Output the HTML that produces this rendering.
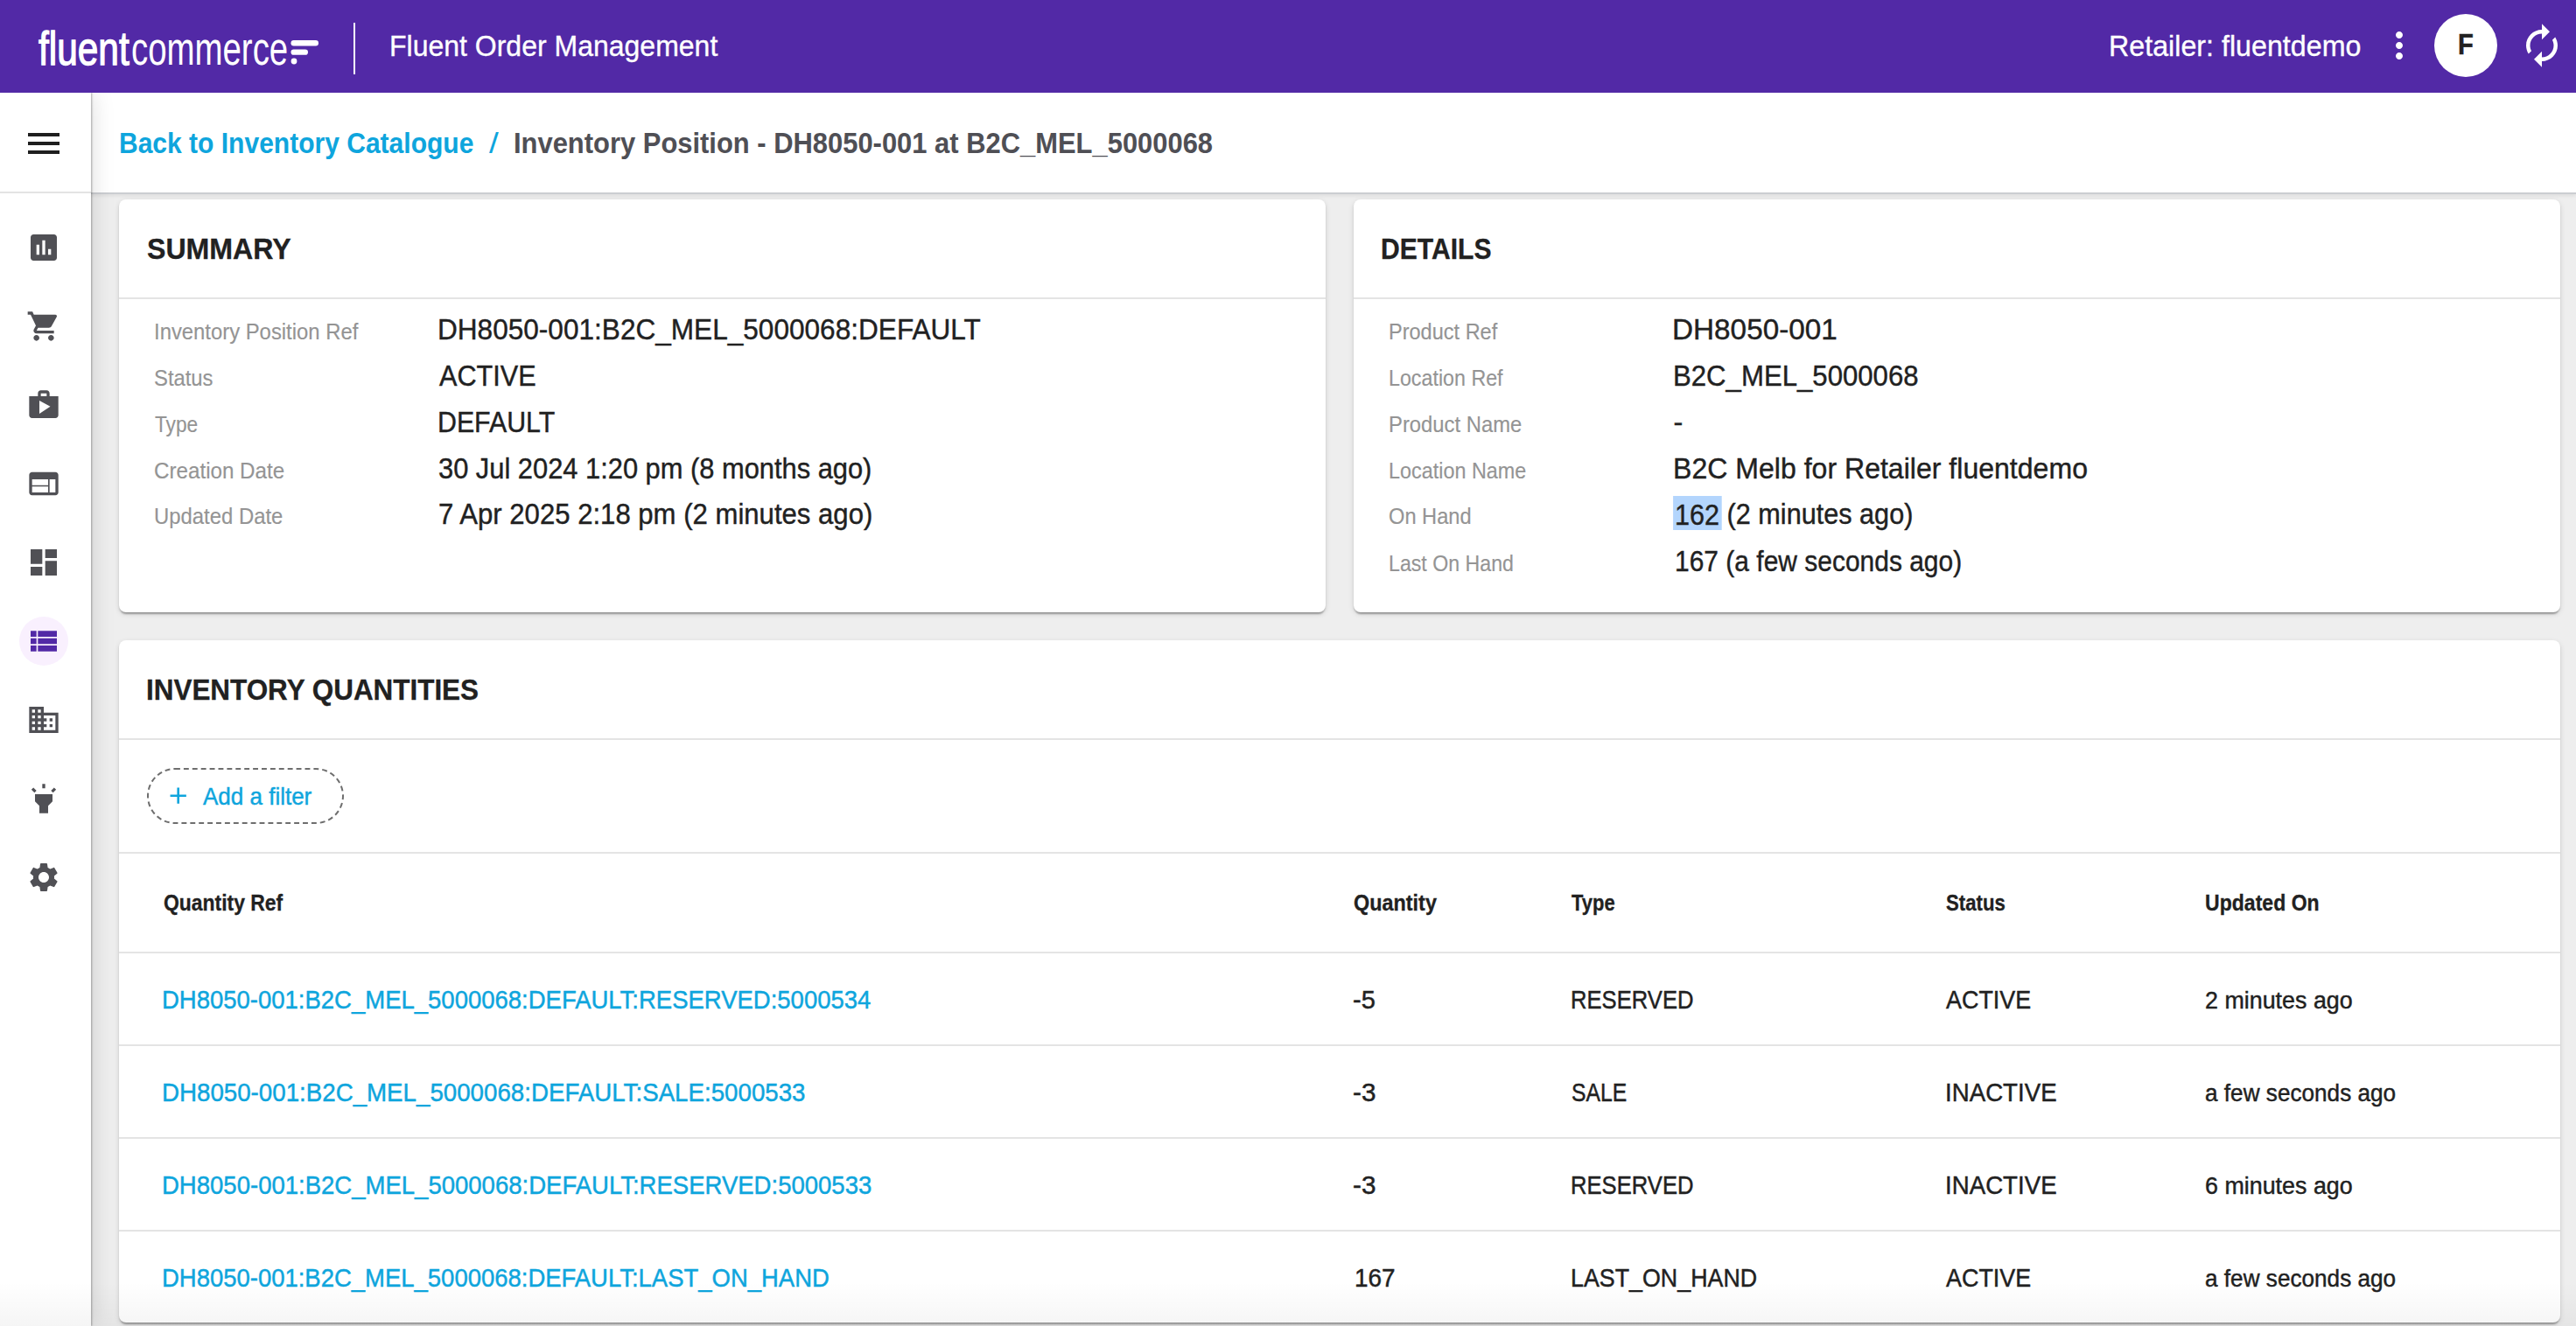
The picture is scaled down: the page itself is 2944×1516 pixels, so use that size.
<!DOCTYPE html>
<html lang="en">
<head>
<meta charset="utf-8">
<title>Fluent Order Management - Inventory Position</title>
<style>
*{box-sizing:border-box}
@media (max-width:2000px){html{zoom:.5}}
html,body{margin:0;padding:0}
body{width:2944px;height:1516px;overflow:hidden;background:#eeeeee;font-family:"Liberation Sans",sans-serif;color:#212121;position:relative}
.t{position:absolute;white-space:pre;line-height:1;margin:0;padding:0;text-decoration:none;font-weight:400;display:block;-webkit-text-stroke:.06px currentColor}
h2.t{font-weight:700}
.ic{position:absolute;display:block}
ul{list-style:none;margin:0;padding:0}
.appbar{position:absolute;left:0;top:0;width:2944px;height:106px;background:#5229a6;z-index:30}
.appbar .vr{position:absolute;left:404px;top:26px;width:2px;height:59px;background:#fff}
.avatar{position:absolute;left:2781.5px;top:15.75px;width:72px;height:72px;border-radius:50%;background:#fff}
.mark{position:absolute;left:330px;top:40px;width:40px;height:40px}
.nav{position:absolute;left:0;top:106px;width:104px;height:1410px;background:#fff;z-index:20;box-shadow:1px 0 2px rgba(0,0,0,.3),2px 0 24px rgba(0,0,0,.13)}
.nav .rule{position:absolute;left:0;top:113px;width:104px;height:2px;background:#e3e3e3}
.halo{position:absolute;width:56px;height:56px;border-radius:50%;background:#f9f0fe}
.crumbs{position:absolute;left:104px;top:106px;width:2840px;height:116px;background:#fff;z-index:10;border-bottom:2px solid #cbcdd1;box-shadow:0 2px 4px rgba(0,0,0,.07)}
.card{position:absolute;background:#fff;border-radius:8px;box-shadow:0 4px 2px -2px rgba(0,0,0,.2),0 2px 2px 0 rgba(0,0,0,.14),0 2px 6px 0 rgba(0,0,0,.12)}
.sep{position:absolute;left:0;right:0;height:2px;background:#e4e4e4}
.chip{position:absolute}
.chip svg.bd{position:absolute;left:0;top:0;overflow:visible}
.lf{-webkit-text-stroke:1.1px #fff}
.appbar .t{-webkit-text-stroke:.35px #fff}
.appbar .avatar .t{-webkit-text-stroke:.5px #212121}
h2.t,.th{-webkit-text-stroke:.3px currentColor}
.k{-webkit-text-stroke:.15px currentColor}
.v{-webkit-text-stroke:.4px currentColor}
.td,.chip .t{-webkit-text-stroke:.45px currentColor}
.appbar .t.lf{-webkit-text-stroke:1.3px #fff}
.appbar .t.lc{-webkit-text-stroke:0}
mark{background:#b3d5fd;color:inherit;padding:3.5px 3px 0 2px;margin:0 -3px 0 -2px}
.fade{position:absolute;left:0;right:0;bottom:0;height:50px;z-index:40;background:linear-gradient(rgba(0,0,0,0),rgba(0,0,0,.04))}
</style>
</head>
<body>
<header class="appbar">
<div class="brand">
<span class="t lf" style="left:44.00px;top:29px;font-size:53px;color:#fff;transform:scaleX(0.8000);transform-origin:0 0;">fluent</span>
<span class="t lc" style="left:150.15px;top:29px;font-size:53px;color:#fff;transform:scaleX(0.7243);transform-origin:0 0;">commerce</span>
<svg class="mark" viewBox="0 0 40 40"><rect x="2.5" y="6" width="31.5" height="6.4" rx="3.2" fill="#fff"/><rect x="2.5" y="16.6" width="19.5" height="6.2" rx="3.1" fill="#fff"/><circle cx="6" cy="30" r="3.4" fill="#fff"/></svg>
</div>
<div class="vr"></div>
<span class="t" style="left:444.59px;top:36px;font-size:33.5px;color:#fff;transform:scaleX(0.9552);transform-origin:0 0;">Fluent Order Management</span>
<span class="t" style="left:2409.83px;top:36px;font-size:33.5px;color:#fff;transform:scaleX(0.9621);transform-origin:0 0;">Retailer: fluentdemo</span>
<svg class="ic" style="left:2717.75px;top:28px;width:48px;height:48px;fill:#fff" viewBox="0 0 24 24"><path d="M12 8c1.1 0 2-.9 2-2s-.9-2-2-2-2 .9-2 2 .9 2 2 2zm0 2c-1.1 0-2 .9-2 2s.9 2 2 2 2-.9 2-2-.9-2-2-2zm0 6c-1.1 0-2 .9-2 2s.9 2 2 2 2-.9 2-2-.9-2-2-2z"/></svg>
<div class="avatar"><span class="t av" style="left:27.59px;top:17.25px;font-size:34px;font-weight:700;transform:scaleX(0.8556);transform-origin:0 0;">F</span></div>
<svg class="ic" style="left:2878px;top:25px;width:54px;height:54px;fill:#fff" viewBox="0 0 24 24"><path d="M12 6v3l4-4-4-4v3c-4.42 0-8 3.58-8 8 0 1.57.46 3.03 1.24 4.26L6.7 14.8c-.45-.83-.7-1.79-.7-2.8 0-3.31 2.69-6 6-6zm6.76 1.74L17.3 9.2c.44.84.7 1.79.7 2.8 0 3.31-2.69 6-6 6v-3l-4 4 4 4v-3c4.42 0 8-3.58 8-8 0-1.57-.46-3.03-1.24-4.26z"/></svg>
</header>
<aside class="nav">
<svg class="ic" style="left:26px;top:34px;width:48px;height:48px;fill:#1f1f1f" viewBox="0 0 24 24"><path d="M3 18h18v-2H3v2zm0-5h18v-2H3v2zm0-7v2h18V6H3z"/></svg>
<div class="rule"></div>
<ul>
<li><svg class="ic" style="left:30px;top:156.5px;width:40px;height:40px;fill:#505055" viewBox="0 0 24 24"><path d="M19 3H5c-1.1 0-2 .9-2 2v14c0 1.1.9 2 2 2h14c1.1 0 2-.9 2-2V5c0-1.1-.9-2-2-2zM9 17H7v-7h2v7zm4 0h-2V7h2v10zm4 0h-2v-4h2v4z"/></svg></li>
<li><svg class="ic" style="left:30px;top:246.5px;width:40px;height:40px;fill:#505055" viewBox="0 0 24 24"><path d="M7 18c-1.1 0-1.99.9-1.99 2S5.9 22 7 22s2-.9 2-2-.9-2-2-2zM1 2v2h2l3.6 7.59-1.35 2.45c-.16.28-.25.61-.25.96 0 1.1.9 2 2 2h12v-2H7.42c-.14 0-.25-.11-.25-.25l.03-.12.9-1.63h7.45c.75 0 1.41-.41 1.75-1.03l3.58-6.49c.08-.14.12-.31.12-.48 0-.55-.45-1-1-1H5.21l-.94-2H1zm16 16c-1.1 0-1.99.9-1.99 2s.89 2 1.99 2 2-.9 2-2-.9-2-2-2z"/></svg></li>
<li><svg class="ic" style="left:30px;top:336.5px;width:40px;height:40px;fill:#505055" viewBox="0 0 24 24"><path d="M16 6V4c0-1.11-.89-2-2-2h-4c-1.11 0-2 .89-2 2v2H2v13c0 1.11.89 2 2 2h16c1.11 0 2-.89 2-2V6h-6zm-6-2h4v2h-4V4zM9 18V9l7.5 4L9 18z"/></svg></li>
<li><svg class="ic" style="left:30px;top:426.5px;width:40px;height:40px;fill:#505055" viewBox="0 0 24 24"><path d="M20 4H4c-1.1 0-1.99.9-1.99 2L2 18c0 1.1.9 2 2 2h16c1.1 0 2-.9 2-2V6c0-1.1-.9-2-2-2zm-5 14H4v-4h11v4zm0-5H4V9h11v4zm5 5h-4V9h4v9z"/></svg></li>
<li><svg class="ic" style="left:30px;top:516.5px;width:40px;height:40px;fill:#505055" viewBox="0 0 24 24"><path d="M3 13h8V3H3v10zm0 8h8v-6H3v6zm10 0h8V11h-8v10zm0-18v6h8V3h-8z"/></svg></li>
<li class="on"><span class="halo" style="left:22px;top:598.5px"></span><svg class="ic" style="left:30px;top:606.5px;width:40px;height:40px;fill:#5229a6" viewBox="0 0 24 24"><path d="M3 14h4v-4H3v4zm0 5h4v-4H3v4zM3 9h4V5H3v4zm5 5h13v-4H8v4zm0 5h13v-4H8v4zM8 5v4h13V5H8z"/></svg></li>
<li><svg class="ic" style="left:30px;top:696.5px;width:40px;height:40px;fill:#505055" viewBox="0 0 24 24"><path d="M12 7V3H2v18h20V7H12zM6 19H4v-2h2v2zm0-4H4v-2h2v2zm0-4H4V9h2v2zm0-4H4V5h2v2zm4 12H8v-2h2v2zm0-4H8v-2h2v2zm0-4H8V9h2v2zm0-4H8V5h2v2zm10 12h-8v-2h2v-2h-2v-2h2v-2h-2V9h8v10zm-2-8h-2v2h2v-2zm0 4h-2v2h2v-2z"/></svg></li>
<li><svg class="ic" style="left:30px;top:786.5px;width:40px;height:40px;fill:#505055" viewBox="0 0 24 24"><path d="M6 14l3 3v5h6v-5l3-3V9H6v5zm5-12h2v3h-2V2zM3.5 5.88l1.41-1.41 2.12 2.12L5.62 8 3.5 5.88zm13.46.71l2.12-2.12 1.41 1.41L18.38 8l-1.42-1.41z"/></svg></li>
<li><svg class="ic" style="left:30px;top:876.5px;width:40px;height:40px;fill:#505055" viewBox="0 0 24 24"><path d="M19.14 12.94c.04-.3.06-.61.06-.94 0-.32-.02-.64-.07-.94l2.03-1.58c.18-.14.23-.41.12-.61l-1.92-3.32c-.12-.22-.37-.29-.59-.22l-2.39.96c-.5-.38-1.03-.7-1.62-.94l-.36-2.54c-.04-.24-.24-.41-.48-.41h-3.84c-.24 0-.43.17-.47.41l-.36 2.54c-.59.24-1.13.57-1.62.94l-2.39-.96c-.22-.08-.47 0-.59.22L2.74 8.87c-.12.21-.08.47.12.61l2.03 1.58c-.05.3-.09.63-.09.94s.02.64.07.94l-2.03 1.58c-.18.14-.23.41-.12.61l1.92 3.32c.12.22.37.29.59.22l2.39-.96c.5.38 1.03.7 1.62.94l.36 2.54c.05.24.24.41.48.41h3.84c.24 0 .44-.17.47-.41l.36-2.54c.59-.24 1.13-.56 1.62-.94l2.39.96c.22.08.47 0 .59-.22l1.92-3.32c.12-.22.07-.47-.12-.61l-2.01-1.58zM12 15.6c-1.98 0-3.6-1.62-3.6-3.6s1.62-3.6 3.6-3.6 3.6 1.62 3.6 3.6-1.62 3.6-3.6 3.6z"/></svg></li>
</ul>
</aside>
<nav class="crumbs">
<a class="t" href="#" style="left:32.01px;top:41px;font-size:33.6px;font-weight:700;color:#0ea5dd;transform:scaleX(0.8940);transform-origin:0 0;">Back to Inventory Catalogue</a>
<span class="t" style="left:454.50px;top:41px;font-size:33.6px;color:#0ea5dd;transform:scaleX(1.1500);transform-origin:0 0;">/</span>
<span class="t" style="left:482.66px;top:41px;font-size:33.6px;font-weight:700;color:#4f4f55;transform:scaleX(0.9208);transform-origin:0 0;">Inventory Position - DH8050-001 at B2C_MEL_5000068</span>
</nav>
<main>
<section class="card" style="left:136px;top:228px;width:1379px;height:472px">
<div class="sep" style="top:111.5px"></div>
<h2 class="t" style="left:31.64px;top:40px;font-size:33.5px;font-weight:700;transform:scaleX(0.9585);transform-origin:0 0;">SUMMARY</h2>
<span class="t k" style="left:39.89px;top:139px;font-size:25px;color:#949494;transform:scaleX(0.9539);transform-origin:0 0;">Inventory Position Ref</span>
<span class="t v" style="left:364.36px;top:133px;font-size:32.5px;transform:scaleX(0.9716);transform-origin:0 0;">DH8050-001:B2C_MEL_5000068:DEFAULT</span>
<span class="t k" style="left:39.65px;top:192px;font-size:25px;color:#949494;transform:scaleX(0.9522);transform-origin:0 0;">Status</span>
<span class="t v" style="left:365.50px;top:186px;font-size:32.5px;transform:scaleX(0.9419);transform-origin:0 0;">ACTIVE</span>
<span class="t k" style="left:40.60px;top:245px;font-size:25px;color:#949494;transform:scaleX(0.9074);transform-origin:0 0;">Type</span>
<span class="t v" style="left:364.44px;top:239px;font-size:32.5px;transform:scaleX(0.9324);transform-origin:0 0;">DEFAULT</span>
<span class="t k" style="left:39.63px;top:298px;font-size:25px;color:#949494;transform:scaleX(0.9673);transform-origin:0 0;">Creation Date</span>
<span class="t v" style="left:365.35px;top:292px;font-size:32.5px;transform:scaleX(0.9488);transform-origin:0 0;">30 Jul 2024 1:20 pm (8 months ago)</span>
<span class="t k" style="left:40.25px;top:350px;font-size:25px;color:#949494;transform:scaleX(0.9549);transform-origin:0 0;">Updated Date</span>
<span class="t v" style="left:365.34px;top:344px;font-size:32.5px;transform:scaleX(0.9572);transform-origin:0 0;">7 Apr 2025 2:18 pm (2 minutes ago)</span>
</section>
<section class="card" style="left:1547px;top:228px;width:1379px;height:472px">
<div class="sep" style="top:111.5px"></div>
<h2 class="t" style="left:31.20px;top:40px;font-size:33.5px;font-weight:700;transform:scaleX(0.8986);transform-origin:0 0;">DETAILS</h2>
<span class="t k" style="left:39.82px;top:139px;font-size:25px;color:#949494;transform:scaleX(0.9412);transform-origin:0 0;">Product Ref</span>
<span class="t v" style="left:364.45px;top:133px;font-size:32.5px;transform:scaleX(1.0247);transform-origin:0 0;">DH8050-001</span>
<span class="t k" style="left:39.84px;top:192px;font-size:25px;color:#949494;transform:scaleX(0.9302);transform-origin:0 0;">Location Ref</span>
<span class="t v" style="left:364.58px;top:186px;font-size:32.5px;transform:scaleX(0.9586);transform-origin:0 0;">B2C_MEL_5000068</span>
<span class="t k" style="left:39.79px;top:245px;font-size:25px;color:#949494;transform:scaleX(0.9529);transform-origin:0 0;">Product Name</span>
<span class="t v" style="left:365.50px;top:239px;font-size:32.5px;transform:scaleX(1.0000);transform-origin:0 0;">-</span>
<span class="t k" style="left:39.83px;top:298px;font-size:25px;color:#949494;transform:scaleX(0.9355);transform-origin:0 0;">Location Name</span>
<span class="t v" style="left:364.53px;top:292px;font-size:32.5px;transform:scaleX(0.9864);transform-origin:0 0;">B2C Melb for Retailer fluentdemo</span>
<span class="t k" style="left:39.65px;top:350px;font-size:25px;color:#949494;transform:scaleX(0.9459);transform-origin:0 0;">On Hand</span>
<span class="t v" style="left:367.12px;top:344px;font-size:32.5px;transform:scaleX(0.9423);transform-origin:0 0;"><mark>162</mark> (2 minutes ago)</span>
<span class="t k" style="left:39.85px;top:404px;font-size:25px;color:#949494;transform:scaleX(0.9265);transform-origin:0 0;">Last On Hand</span>
<span class="t v" style="left:367.16px;top:398px;font-size:32.5px;transform:scaleX(0.9221);transform-origin:0 0;">167 (a few seconds ago)</span>
</section>
<section class="card" style="left:136px;top:732px;width:2790px;height:780px">
<div class="sep" style="top:112px"></div>
<div class="chip" style="left:32px;top:146px;width:225px;height:64px">
<svg class="bd" width="225" height="64" viewBox="0 0 225 64"><rect x="1" y="1" width="223" height="62" rx="31" fill="none" stroke="#6e6e6e" stroke-width="2" stroke-dasharray="5.9 4"/></svg>
<svg class="ic" style="left:20.3px;top:16.3px;width:31.4px;height:31.4px;fill:#0ea5dd" viewBox="0 0 24 24"><path d="M19 13h-6v6h-2v-6H5v-2h6V5h2v6h6v2z"/></svg>
<span class="t" style="left:64.30px;top:19px;font-size:28px;color:#0ea5dd;transform:scaleX(0.9284);transform-origin:0 0;">Add a filter</span>
</div>
<div class="sep" style="top:242px"></div>
<div class="sep" style="top:355.5px"></div>
<div class="sep" style="top:462px"></div>
<div class="sep" style="top:567.5px"></div>
<div class="sep" style="top:673.5px"></div>
<h2 class="t" style="left:31.12px;top:40px;font-size:33.5px;font-weight:700;transform:scaleX(0.9380);transform-origin:0 0;">INVENTORY QUANTITIES</h2>
<span class="t th" style="left:50.50px;top:287px;font-size:26px;font-weight:700;transform:scaleX(0.8814);transform-origin:0 0;">Quantity Ref</span>
<span class="t th" style="left:1411.40px;top:287px;font-size:26px;font-weight:700;transform:scaleX(0.9000);transform-origin:0 0;">Quantity</span>
<span class="t th" style="left:1660.20px;top:287px;font-size:26px;font-weight:700;transform:scaleX(0.8458);transform-origin:0 0;">Type</span>
<span class="t th" style="left:2088.00px;top:287px;font-size:26px;font-weight:700;transform:scaleX(0.8544);transform-origin:0 0;">Status</span>
<span class="t th" style="left:2384.11px;top:287px;font-size:26px;font-weight:700;transform:scaleX(0.8870);transform-origin:0 0;">Updated On</span>
<a class="t td" href="#" style="left:48.60px;top:397px;font-size:29px;color:#0ea5dd;transform:scaleX(0.9478);transform-origin:0 0;">DH8050-001:B2C_MEL_5000068:DEFAULT:RESERVED:5000534</a>
<span class="t td" style="left:1410.40px;top:397px;font-size:29px;transform:scaleX(1.0042);transform-origin:0 0;">-5</span>
<span class="t td" style="left:1658.83px;top:397px;font-size:29px;transform:scaleX(0.8840);transform-origin:0 0;">RESERVED</span>
<span class="t td" style="left:2088.00px;top:397px;font-size:29px;transform:scaleX(0.9279);transform-origin:0 0;">ACTIVE</span>
<span class="t td" style="left:2384.35px;top:397px;font-size:28.2px;transform:scaleX(0.9528);transform-origin:0 0;">2 minutes ago</span>
<a class="t td" href="#" style="left:48.59px;top:503px;font-size:29px;color:#0ea5dd;transform:scaleX(0.9551);transform-origin:0 0;">DH8050-001:B2C_MEL_5000068:DEFAULT:SALE:5000533</a>
<span class="t td" style="left:1410.38px;top:503px;font-size:29px;transform:scaleX(1.0250);transform-origin:0 0;">-3</span>
<span class="t td" style="left:1659.75px;top:503px;font-size:29px;transform:scaleX(0.8548);transform-origin:0 0;">SALE</span>
<span class="t td" style="left:2087.09px;top:503px;font-size:29px;transform:scaleX(0.9542);transform-origin:0 0;">INACTIVE</span>
<span class="t td" style="left:2384.37px;top:503px;font-size:28.2px;transform:scaleX(0.9282);transform-origin:0 0;">a few seconds ago</span>
<a class="t td" href="#" style="left:48.60px;top:609px;font-size:29px;color:#0ea5dd;transform:scaleX(0.9489);transform-origin:0 0;">DH8050-001:B2C_MEL_5000068:DEFAULT:RESERVED:5000533</a>
<span class="t td" style="left:1410.38px;top:609px;font-size:29px;transform:scaleX(1.0250);transform-origin:0 0;">-3</span>
<span class="t td" style="left:1658.83px;top:609px;font-size:29px;transform:scaleX(0.8840);transform-origin:0 0;">RESERVED</span>
<span class="t td" style="left:2087.09px;top:609px;font-size:29px;transform:scaleX(0.9542);transform-origin:0 0;">INACTIVE</span>
<span class="t td" style="left:2384.35px;top:609px;font-size:28.2px;transform:scaleX(0.9528);transform-origin:0 0;">6 minutes ago</span>
<a class="t td" href="#" style="left:48.61px;top:715px;font-size:29px;color:#0ea5dd;transform:scaleX(0.9471);transform-origin:0 0;">DH8050-001:B2C_MEL_5000068:DEFAULT:LAST_ON_HAND</a>
<span class="t td" style="left:1412.24px;top:715px;font-size:29px;transform:scaleX(0.9638);transform-origin:0 0;">167</span>
<span class="t td" style="left:1658.75px;top:715px;font-size:29px;transform:scaleX(0.9250);transform-origin:0 0;">LAST_ON_HAND</span>
<span class="t td" style="left:2088.00px;top:715px;font-size:29px;transform:scaleX(0.9279);transform-origin:0 0;">ACTIVE</span>
<span class="t td" style="left:2384.37px;top:715px;font-size:28.2px;transform:scaleX(0.9282);transform-origin:0 0;">a few seconds ago</span>
</section>
</main>
<div class="fade"></div>
</body>
</html>
